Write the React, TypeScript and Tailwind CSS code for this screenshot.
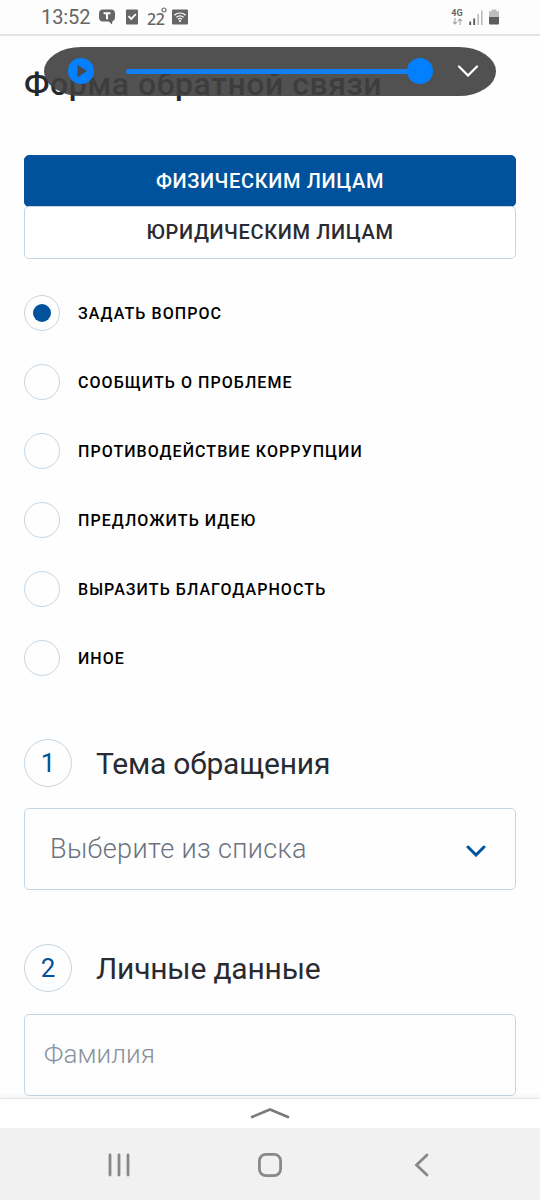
import React, { useState } from "react";

const topics = [
  "ЗАДАТЬ ВОПРОС",
  "СООБЩИТЬ О ПРОБЛЕМЕ",
  "ПРОТИВОДЕЙСТВИЕ КОРРУПЦИИ",
  "ПРЕДЛОЖИТЬ ИДЕЮ",
  "ВЫРАЗИТЬ БЛАГОДАРНОСТЬ",
  "ИНОЕ",
];

const StatusBar: React.FC = () => (
  <header className="flex h-9 shrink-0 items-start justify-between border-b-2 border-[#e3e3e3] bg-[#fdfdfd] pl-[41px] pr-[41px] text-[#666]">
    <div className="flex h-[34px] items-center">
      <span className="w-[58px] whitespace-nowrap text-[20px] leading-[34px] tracking-[-0.1px]">13:52</span>
      <svg className="h-4 w-4" viewBox="0 0 16 16">
        <path d="M4 0.5h8a4 4 0 0 1 4 4v4a4 4 0 0 1-2.6 3.8L13 15.5l-3.2-3H4a4 4 0 0 1-4-4v-4a4 4 0 0 1 4-4z" fill="#666" />
        <path d="M4.6 4.3h6.8M8 4.3v5.9" stroke="#fff" strokeWidth="2" />
      </svg>
      <svg className="ml-[11px] h-4 w-3" viewBox="0 0 12 16">
        <rect y="0.5" width="12" height="15" rx="1" fill="#666" />
        <path d="M2.5 7.2l2.7 2.7 4.6-4.8" fill="none" stroke="#fff" strokeWidth="1.8" />
      </svg>
      <span className="relative ml-[9px] w-[25px] pt-[3px] font-['Noto_Sans'] text-[16px] font-medium leading-none tracking-[-0.4px]">
        22
        <svg className="absolute -top-[1px] left-[14px] h-[6px] w-[6px]" viewBox="0 0 6 6">
          <circle cx="3" cy="3" r="2" fill="none" stroke="#666" strokeWidth="1.2" />
        </svg>
      </span>
      <svg className="h-4 w-4" viewBox="0 0 16 16">
        <rect y="0.5" width="16" height="15" rx="1" fill="#666" />
        <g fill="none" stroke="#fff" strokeWidth="1.2">
          <path d="M2.4 6.3a8 8 0 0 1 11.2 0" />
          <path d="M4.3 8.4a5.3 5.3 0 0 1 7.4 0" />
          <path d="M6.1 10.3a2.8 2.8 0 0 1 3.8 0" />
        </g>
        <circle cx="8" cy="12" r="1.1" fill="#fff" />
      </svg>
    </div>
    <div className="flex h-[34px] items-center">
      <div className="flex w-3 flex-col items-center">
        <span className="text-[9px] font-bold leading-[9px]">4G</span>
        <svg className="h-[7px] w-[11px]" viewBox="0 0 11 7">
          <path d="M3 0v6M1 4l2 2 2-2M8 7V1M6 3l2-2 2 2" fill="none" stroke="#aaa" strokeWidth="1.2" />
        </svg>
      </div>
      <svg className="ml-[6px] h-[15px] w-[14px]" viewBox="0 0 14 15">
        <path d="M1.2 11.5V15M5.2 8.5V15" stroke="#555" strokeWidth="1.8" />
        <path d="M9.2 4V15M12.8 0.5V15" stroke="#bbb" strokeWidth="1.6" />
      </svg>
      <svg className="ml-[6px] h-4 w-[10px]" viewBox="0 0 10 16">
        <path d="M2.5 0.5h5v1.8H10V8H0V2.3h2.5z" fill="#bdbdbd" />
        <path d="M0 8h10v6.5a1 1 0 0 1-1 1H1a1 1 0 0 1-1-1z" fill="#5c5c5c" />
      </svg>
    </div>
  </header>
);

// Floating audio player, sits above the page heading
const Player: React.FC = () => (
  <div className="absolute left-[44px] top-[47px] flex h-[49px] w-[452px] items-center rounded-[38px/25px] bg-[#404040]/91 pb-px pl-6 pr-[17px]">
    <svg className="h-[26px] w-[26px]" viewBox="0 0 26 26">
      <circle cx="13" cy="13" r="13" fill="#0580ff" />
      <path d="M9.5 6.5v13l9.5-6.5z" fill="#464a50" />
    </svg>
    <div className="ml-8 flex h-[26px] w-[307px] items-center">
      <div className="h-[5px] flex-1 rounded-l-full bg-[#147ff0]" />
      <div className="-ml-px h-[26px] w-[26px] rounded-full bg-[#0280ff]" />
    </div>
    <svg className="ml-auto h-[12px] w-[22px]" viewBox="0 0 22 12">
      <path d="M2 1.5l9 9 9-9" fill="none" stroke="#fff" strokeWidth="2.2" strokeLinecap="round" />
    </svg>
  </div>
);

const SectionTitle: React.FC<{ step: number; title: string }> = ({ step, title }) => (
  <div className="flex h-12 items-center">
    <span className="flex h-12 w-12 items-center justify-center rounded-full border-[1.5px] border-[#c5d6e3] text-[26px] text-[#00529c]">
      {step}
    </span>
    <h2 className="ml-6 whitespace-nowrap pt-[2px] text-[30px] leading-none tracking-[-0.2px] text-[#292b32]">
      {title}
    </h2>
  </div>
);

const App: React.FC = () => {
  const [topic, setTopic] = useState(0);
  const [person, setPerson] = useState(0);

  return (
    <div className="relative flex h-[1200px] w-[540px] flex-col overflow-hidden bg-[#fefefe] font-[Roboto,sans-serif]">
      <StatusBar />

      <main className="min-h-0 flex-1 overflow-hidden px-6">
        <h1 className="mt-[28px] h-10 whitespace-nowrap text-[32px] font-medium leading-10 tracking-[0.53px] text-[#25282f]">
          Форма обратной связи
        </h1>

        <div className="mt-[51px] flex flex-col">
          {["ФИЗИЧЕСКИМ ЛИЦАМ", "ЮРИДИЧЕСКИМ ЛИЦАМ"].map((label, i) => (
            <button
              key={label}
              type="button"
              onClick={() => setPerson(i)}
              className={`h-[52px] rounded-[5px] border-[1.5px] text-[20px] font-medium tracking-[0.65px] last:-mt-px last:h-[53px] last:pb-[2px] ${
                person === i
                  ? "border-[#00529c] bg-[#00529c] text-white"
                  : "border-[#c5d6e3] bg-white text-[#292b32]"
              }`}
            >
              {label}
            </button>
          ))}
        </div>

        <div className="mt-9 flex flex-col gap-[33px]">
          {topics.map((label, i) => (
            <button
              key={label}
              type="button"
              onClick={() => setTopic(i)}
              className="flex h-9 items-center text-left"
            >
              <span className="flex h-9 w-9 items-center justify-center rounded-full border-[1.5px] border-[#c5d6e3]">
                {topic === i && <span className="h-[18px] w-[18px] rounded-full bg-[#00529c]" />}
              </span>
              <span className="ml-[18px] whitespace-nowrap pt-px text-[16px] font-medium tracking-[1.06px] text-black">
                {label}
              </span>
            </button>
          ))}
        </div>

        <section className="mt-[63px]">
          <SectionTitle step={1} title="Тема обращения" />
          <div className="mt-[21px] flex h-[82px] items-center justify-between rounded-[5px] border-[1.5px] border-[#c5d6e3] pl-[25px] pr-[29px]">
            <span className="text-[27px] font-light tracking-[0.36px] text-[#6b7280]">Выберите из списка</span>
            <svg className="mt-1 h-3 w-5" viewBox="0 0 20 12">
              <path d="M2 2l8 8 8-8" fill="none" stroke="#00529c" strokeWidth="3" strokeLinecap="round" />
            </svg>
          </div>
        </section>

        <section className="mt-[54px]">
          <SectionTitle step={2} title="Личные данные" />
          <div className="mt-[22px] flex h-[82px] items-center rounded-[5px] border-[1.5px] border-[#c5d6e3] pb-[2px] pl-[19px]">
            <span className="text-[26px] font-light tracking-[0.1px] text-[#8b929c]">Фамилия</span>
          </div>
        </section>
      </main>

      {/* Browser toolbar handle */}
      <div className="flex h-[30px] shrink-0 justify-center border-t border-[#e6e6e8] bg-white pt-[8px] shadow-[0_-1px_6px_rgba(0,0,0,0.07)]">
        <svg className="h-[12px] w-10" viewBox="0 0 40 12">
          <path d="M2 10l18-7.5L38 10" fill="none" stroke="#7b7b7b" strokeWidth="2.6" strokeLinecap="round" />
        </svg>
      </div>

      <nav className="flex h-[72px] shrink-0 items-center bg-[#f1f1f1] pl-[107px] pt-px">
        <svg className="h-6 w-6" viewBox="0 0 24 24">
          <path d="M3 2v20M12 2v20M21 2v20" stroke="#888" strokeWidth="2.8" strokeLinecap="round" />
        </svg>
        <svg className="ml-[126px] h-[26px] w-[26px]" viewBox="0 0 26 26">
          <rect x="2.4" y="2.4" width="21.2" height="21.2" rx="6.5" fill="none" stroke="#888" strokeWidth="2.8" />
        </svg>
        <svg className="ml-[131px] h-6 w-[15px]" viewBox="0 0 15 24">
          <path d="M13 2L2.5 12 13 22" fill="none" stroke="#888" strokeWidth="2.8" strokeLinecap="round" />
        </svg>
      </nav>

      <Player />
    </div>
  );
};

export default App;
